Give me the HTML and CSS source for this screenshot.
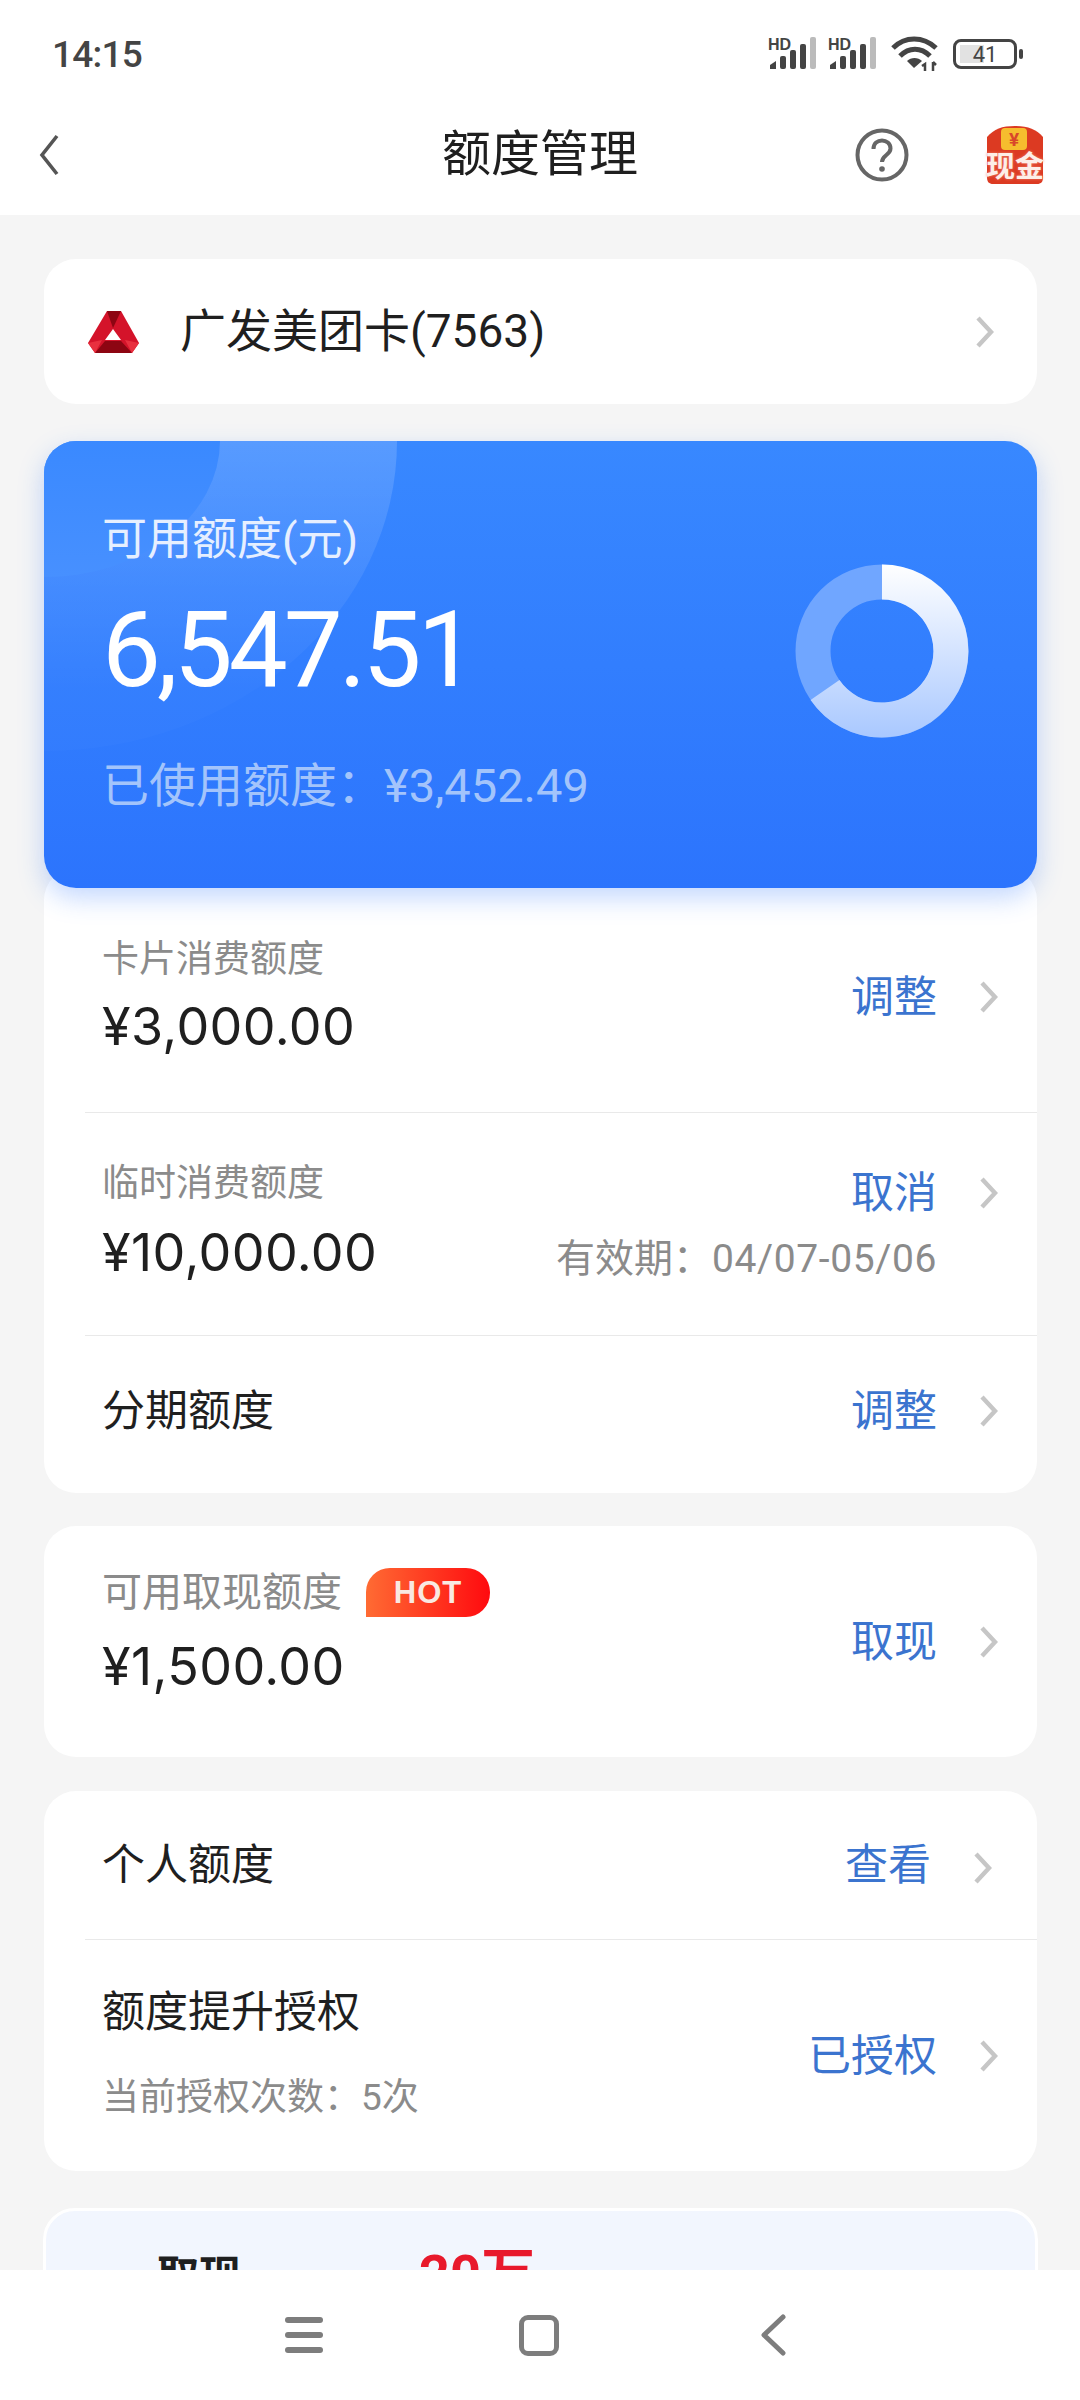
FILE: index.html
```html
<!DOCTYPE html>
<html lang="zh-CN">
<head>
    <meta charset="UTF-8">
    <meta name="viewport" content="width=device-width, initial-scale=1.0">
    <title>额度管理</title>
    <link rel="stylesheet" href="styles.css">
</head>
<body>
    <div class="screen">
        <div class="status-bar">
            <span class="clock">14:15</span>
            <div class="status-icons">
                <svg class="signal" width="50" height="34" viewBox="0 0 50 34">
                    <text x="0" y="13" class="hd">HD</text>
                    <path d="M2 32 V28 L8 24 V32 Z" fill="#444"/>
                    <rect x="12" y="19" width="6" height="13" rx="2" fill="#444"/>
                    <rect x="22" y="13" width="6" height="19" rx="2" fill="#444"/>
                    <rect x="32" y="7" width="6" height="25" rx="2" fill="#444"/>
                    <rect x="42" y="0" width="6" height="32" rx="2" fill="#bbb"/>
                </svg>
                <svg class="signal" width="50" height="34" viewBox="0 0 50 34">
                    <text x="0" y="13" class="hd">HD</text>
                    <path d="M2 32 V28 L8 24 V32 Z" fill="#444"/>
                    <rect x="12" y="19" width="6" height="13" rx="2" fill="#444"/>
                    <rect x="22" y="13" width="6" height="19" rx="2" fill="#444"/>
                    <rect x="32" y="7" width="6" height="25" rx="2" fill="#444"/>
                    <rect x="42" y="0" width="6" height="32" rx="2" fill="#bbb"/>
                </svg>
                <svg class="wifi" width="48" height="36" viewBox="0 0 48 36">
                    <path d="M2 12 C14 0 32 0 45 12" fill="none" stroke="#444" stroke-width="5"/>
                    <path d="M9 20 C18 11 30 11 39 20" fill="none" stroke="#444" stroke-width="5"/>
                    <path d="M16 25 C20 21 27 21 31 25 L23 32 Z" fill="#444"/>
                    <path d="M34 35 V28 L31 30 M42 26 V35 M42 26 L45 29" fill="none" stroke="#444" stroke-width="2.5"/>
                </svg>
                <div class="battery">
                    <div class="battery-fill"></div>
                    <span class="battery-num">41</span>
                </div>
                <div class="battery-nub"></div>
            </div>
        </div>

        <header class="top-bar">
            <svg class="back" width="20" height="44" viewBox="0 0 20 44">
                <path d="M18 3 L3 22 L18 41" fill="none" stroke="#555" stroke-width="3.6"/>
            </svg>
            <h1 class="page-title">额度管理</h1>
            <svg class="help" width="54" height="54" viewBox="0 0 54 54">
                <circle cx="27" cy="27" r="24.5" fill="none" stroke="#666" stroke-width="4"/>
                <path d="M18.5 21 C18.5 9.5 35.5 10 35.5 20.5 C35.5 27 27 27 27 34" fill="none" stroke="#666" stroke-width="4"/>
                <circle cx="27" cy="41" r="2.8" fill="#666"/>
            </svg>
            <div class="cash-icon">
                <svg width="58" height="60" viewBox="0 0 58 60">
                    <path d="M1 12 C8 4 16 1 29 1 C42 1 50 4 57 12 V52 C57 57 55 59 51 59 H7 C3 59 1 57 1 52 Z" fill="#dc3a22"/>
                    <rect x="15" y="3" width="26" height="22" rx="4" fill="#f6bd2e"/>
                    <text x="28" y="21" class="cash-yen">¥</text>
                </svg>
                <span class="cash-text">现金</span>
            </div>
        </header>

        <main class="content">
            <section class="card card-bank">
                <svg class="bank-logo" width="51" height="42" viewBox="0 0 51 42">
                    <path d="M19 0 H33 L51 32 L44 42 H7 L0 32 Z M25 18 L17 29 H33 Z" fill="#d4132a" fill-rule="evenodd"/>
                    <path d="M19 0 H33 L25 17 Z" fill="#8d0512"/>
                    <path d="M17 30 H33 L44 42 H7 Z" fill="#8d0512"/>
                    <path d="M0 32 L14 29 L7 42 Z" fill="#e8303f"/>
                    <path d="M37 29 L51 32 L44 42 Z" fill="#e8303f"/>
                </svg>
                <span class="bank-name">广发美团卡(7563)</span>
                <svg class="chevron chevron-bank" width="20" height="34" viewBox="0 0 20 34"><path d="M3 3 L16 17 L3 31" fill="none" stroke="#c6c6c6" stroke-width="4.4"/></svg>
            </section>

            <section class="card-blue">
                <div class="arc arc-big"></div>
                <div class="arc arc-small"></div>
                <div class="blue-text">
                    <div class="blue-label">可用额度(元)</div>
                    <div class="blue-amount">6,547.51</div>
                    <div class="blue-used">已使用额度：¥3,452.49</div>
                </div>
                <svg class="donut" width="174" height="174" viewBox="0 0 174 174">
                    <defs>
                        <linearGradient id="donutFill" gradientUnits="userSpaceOnUse" x1="0" y1="0" x2="0" y2="174">
                            <stop offset="0" stop-color="#ffffff"/>
                            <stop offset="1" stop-color="#a9c8ff"/>
                        </linearGradient>
                    </defs>
                    <circle cx="87" cy="87" r="69" fill="none" stroke="#70a6ff" stroke-width="35"/>
                    <path d="M87 18 A69 69 0 1 1 30 126" fill="none" stroke="url(#donutFill)" stroke-width="35"/>
                </svg>
            </section>

            <section class="card card-limits">
                <div class="row row-first">
                    <div class="row-main">
                        <div class="label">卡片消费额度</div>
                        <div class="amount">¥3,000.00</div>
                    </div>
                    <div class="row-side">
                        <div class="action-line">
                            <span class="action">调整</span>
                            <svg class="chevron" width="20" height="34" viewBox="0 0 20 34"><path d="M3 3 L16 17 L3 31" fill="none" stroke="#c6c6c6" stroke-width="4.4"/></svg>
                        </div>
                    </div>
                </div>
                <div class="row row-temp">
                    <div class="row-main">
                        <div class="label">临时消费额度</div>
                        <div class="amount">¥10,000.00</div>
                    </div>
                    <div class="row-side">
                        <div class="action-line">
                            <span class="action">取消</span>
                            <svg class="chevron" width="20" height="34" viewBox="0 0 20 34"><path d="M3 3 L16 17 L3 31" fill="none" stroke="#c6c6c6" stroke-width="4.4"/></svg>
                        </div>
                        <div class="valid">有效期：<span class="valid-date">04/07-05/06</span></div>
                    </div>
                </div>
                <div class="row row-plain">
                    <div class="row-main">
                        <div class="row-title">分期额度</div>
                    </div>
                    <div class="row-side">
                        <div class="action-line">
                            <span class="action">调整</span>
                            <svg class="chevron" width="20" height="34" viewBox="0 0 20 34"><path d="M3 3 L16 17 L3 31" fill="none" stroke="#c6c6c6" stroke-width="4.4"/></svg>
                        </div>
                    </div>
                </div>
            </section>

            <section class="card card-cash">
                <div class="row row-cash">
                    <div class="row-main">
                        <div class="label label-hot">可用取现额度<span class="hot">HOT</span></div>
                        <div class="amount">¥1,500.00</div>
                    </div>
                    <div class="row-side">
                        <div class="action-line">
                            <span class="action">取现</span>
                            <svg class="chevron" width="20" height="34" viewBox="0 0 20 34"><path d="M3 3 L16 17 L3 31" fill="none" stroke="#c6c6c6" stroke-width="4.4"/></svg>
                        </div>
                    </div>
                </div>
            </section>

            <section class="card card-personal">
                <div class="row row-person">
                    <div class="row-main">
                        <div class="row-title">个人额度</div>
                    </div>
                    <div class="row-side">
                        <div class="action-line action-line-wide">
                            <span class="action">查看</span>
                            <svg class="chevron chevron-low" width="20" height="34" viewBox="0 0 20 34"><path d="M3 3 L16 17 L3 31" fill="none" stroke="#c6c6c6" stroke-width="4.4"/></svg>
                        </div>
                    </div>
                </div>
                <div class="row row-auth">
                    <div class="row-main">
                        <div class="row-title">额度提升授权</div>
                        <div class="auth-count">当前授权次数：5次</div>
                    </div>
                    <div class="row-side">
                        <div class="action-line">
                            <span class="action">已授权</span>
                            <svg class="chevron" width="20" height="34" viewBox="0 0 20 34"><path d="M3 3 L16 17 L3 31" fill="none" stroke="#c6c6c6" stroke-width="4.4"/></svg>
                        </div>
                    </div>
                </div>
            </section>

            <section class="card-promo">
                <span class="promo-title">取现</span>
                <span class="promo-value">20万</span>
            </section>
        </main>

        <nav class="nav-bar">
            <div class="nav-menu">
                <span></span><span></span><span></span>
            </div>
            <div class="nav-home"></div>
            <svg class="nav-back" width="26" height="42" viewBox="0 0 26 42">
                <path d="M23 3 L4 21 L23 39" fill="none" stroke="#7d7d7d" stroke-width="5" stroke-linecap="round" stroke-linejoin="round"/>
            </svg>
        </nav>
    </div>
</body>
</html>
```

FILE: styles.css
```css
* {
    box-sizing: border-box;
}
html, body {
    margin: 0;
    padding: 0;
}
body {
    font-family: Roboto, "Noto Sans CJK SC", sans-serif;
    color: #1f1f1f;
    background: #f5f5f5;
}
.screen {
    width: 1080px;
    height: 2400px;
    display: flex;
    flex-direction: column;
    overflow: hidden;
}

/* status bar */
.status-bar {
    height: 100px;
    padding: 8px 57px 0 52px;
    background: #fff;
    display: flex;
    align-items: center;
    justify-content: space-between;
    flex-shrink: 0;
}
.clock {
    font-size: 37px;
    font-weight: 500;
    color: #444;
    letter-spacing: -0.8px;
}
.status-icons {
    display: flex;
    align-items: center;
}
.signal {
    margin-right: 10px;
}
.hd {
    font-family: "Liberation Sans", sans-serif;
    font-size: 16px;
    font-weight: 700;
    fill: #444;
}
.wifi {
    margin: 0 14px 0 3px;
}
.battery {
    width: 64px;
    height: 30px;
    border: 3px solid #444;
    border-radius: 8px;
    display: flex;
    align-items: center;
    justify-content: center;
    position: relative;
}
.battery-fill {
    position: absolute;
    left: 4px;
    top: 3px;
    bottom: 3px;
    width: 24px;
    background: #e2e2e2;
}
.battery-num {
    position: relative;
    font-size: 22px;
    color: #444;
}
.battery-nub {
    width: 4px;
    height: 10px;
    margin-left: 2px;
    background: #444;
    border-radius: 2px;
}

/* header */
.top-bar {
    height: 115px;
    background: #fff;
    display: flex;
    align-items: center;
    position: relative;
    padding: 0 36px 6px 39px;
    flex-shrink: 0;
}
.back {
    flex-shrink: 0;
}
.page-title {
    margin: 0;
    position: absolute;
    left: 0;
    right: 0;
    top: 20px;
    text-align: center;
    font-size: 49px;
    line-height: 70px;
    font-weight: 400;
    pointer-events: none;
}
.help {
    margin-left: auto;
}
.cash-icon {
    width: 58px;
    height: 60px;
    margin-left: 77px;
    position: relative;
}
.cash-text {
    position: absolute;
    left: -1px;
    top: 25px;
    width: 60px;
    text-align: center;
    font-size: 29px;
    line-height: 34px;
    font-weight: 700;
    color: #fdeee8;
    white-space: nowrap;
    text-shadow: 0 0 3px #f0806c;
}
.cash-yen {
    font-size: 19px;
    font-weight: 700;
    fill: #d9472a;
    text-anchor: middle;
}

/* content */
.content {
    flex: 1;
    min-height: 0;
    overflow: hidden;
    padding: 44px 43px 0 44px;
}
.card {
    background: #fff;
    border-radius: 32px;
}
.card-bank {
    height: 145px;
    display: flex;
    align-items: center;
    padding: 0 42px 0 44px;
}
.bank-logo {
    flex-shrink: 0;
}
.bank-name {
    margin: -9px 0 0 41px;
    font-size: 46px;
}
.chevron {
    flex-shrink: 0;
    display: block;
}
.chevron-bank {
    margin-left: auto;
}
.chevron-low {
    margin-top: 6px;
}

/* blue card */
.card-blue {
    margin-top: 37px;
    height: 447px;
    position: relative;
    z-index: 1;
    overflow: hidden;
    border-radius: 32px;
    background: linear-gradient(180deg, #3888ff 0%, #2c74fd 100%);
    box-shadow: 0 10px 26px rgba(44, 116, 253, 0.28);
    padding: 69px 68px 0 58px;
    display: flex;
    align-items: flex-start;
    justify-content: space-between;
}
.arc {
    position: absolute;
    border-radius: 50%;
}
.arc-big {
    left: -353px;
    top: -310px;
    width: 706px;
    height: 620px;
    background: linear-gradient(180deg, rgba(255, 255, 255, 0.16) 50%, rgba(255, 255, 255, 0.015) 90%);
}
.arc-small {
    left: -176px;
    top: -136px;
    width: 352px;
    height: 272px;
    background: linear-gradient(180deg, #3a89ff 50%, #4790ff 100%);
}
.blue-text {
    position: relative;
    color: #fff;
}
.blue-label {
    font-size: 45px;
    line-height: 60px;
    color: #e6efff;
}
.blue-amount {
    font-size: 105px;
    line-height: 120px;
    margin-top: 21px;
    letter-spacing: -4px;
}
.blue-used {
    font-size: 47px;
    line-height: 60px;
    margin-top: 45px;
    color: #a3c4fb;
}
.donut {
    position: relative;
    flex-shrink: 0;
    margin-top: 54px;
}

/* rows */
.card-limits {
    margin-top: -20px;
    padding-top: 20px;
    height: 625px;
}
.row {
    margin-left: 41px;
    padding: 0 38px 0 17px;
    display: flex;
    justify-content: space-between;
    align-items: center;
}
.row + .row {
    border-top: 1px solid #e9e9e9;
}
.row-first {
    height: 224px;
    padding-bottom: 6px;
}
.row-temp {
    height: 223px;
}
.row-plain {
    height: 158px;
    padding-bottom: 8px;
}
.row-main {
    display: flex;
    flex-direction: column;
}
.row-side {
    display: flex;
    flex-direction: column;
    align-items: flex-end;
}
.label {
    font-size: 37px;
    line-height: 50px;
    color: #8b8b8b;
}
.row-first .label {
    margin-top: -3px;
}
.row-temp .label {
    margin-top: -6px;
}
.amount {
    font-family: Inter, "Noto Sans CJK SC", sans-serif;
    font-size: 52px;
    line-height: 60px;
    letter-spacing: 0.4px;
    margin-top: 12px;
    color: #1f1f1f;
}
.row-temp .amount {
    margin-top: 14px;
}
.row-title {
    font-size: 43px;
    line-height: 58px;
}
.action-line {
    display: flex;
    align-items: center;
    gap: 42px;
}
.action {
    font-size: 43px;
    line-height: 58px;
    color: #3b74cf;
}
.valid {
    margin: 12px 62px 0 0;
    font-size: 39px;
    line-height: 50px;
    color: #8b8b8b;
}
.valid-date {
    letter-spacing: 0.6px;
}
.label-hot {
    display: flex;
    align-items: center;
    font-size: 40px;
    margin-top: -18px;
}
.hot {
    margin: -2px 0 0 24px;
    width: 124px;
    height: 49px;
    border-radius: 24px 24px 24px 0;
    background: linear-gradient(90deg, #ff6b33, #ff0a0f);
    color: #f9e9e2;
    font-size: 31px;
    line-height: 49px;
    font-weight: 700;
    letter-spacing: 1px;
    text-align: center;
    font-family: "Liberation Sans", sans-serif;
}
.card-cash {
    margin-top: 33px;
    height: 231px;
}
.row-cash {
    height: 231px;
}
.row-cash .amount {
    margin-top: 19px;
}
.card-personal {
    margin-top: 34px;
    height: 380px;
}
.row-person {
    height: 148px;
    padding-right: 44px;
}
.row-auth {
    height: 232px;
}
.row-auth .row-main {
    margin-top: -6px;
}
.auth-count {
    margin-top: 32px;
    font-size: 37px;
    line-height: 50px;
    color: #8b8b8b;
}
.card-promo {
    margin-top: 37px;
    height: 200px;
    margin-left: -1px;
    margin-right: -1px;
    border: 3px solid #fff;
    border-radius: 32px;
    background: #f2f6fe;
    display: flex;
    align-items: flex-start;
    padding: 36px 0 0 111px;
}
.promo-title {
    font-size: 42px;
    line-height: 60px;
    font-weight: 700;
}
.promo-value {
    margin: -2px 0 0 178px;
    font-size: 54px;
    line-height: 60px;
    font-weight: 700;
    color: #e8192c;
}

/* navigation bar */
.nav-bar {
    height: 130px;
    flex-shrink: 0;
    background: #fff;
    position: relative;
    z-index: 2;
    display: flex;
    align-items: center;
    padding: 0 0 0 285px;
}
.nav-menu {
    width: 38px;
    display: flex;
    flex-direction: column;
    gap: 9px;
}
.nav-menu span {
    height: 6px;
    border-radius: 3px;
    background: #7d7d7d;
}
.nav-home {
    width: 40px;
    height: 41px;
    margin-left: 196px;
    border: 5px solid #7d7d7d;
    border-radius: 9px;
}
.nav-back {
    margin-left: 201px;
}
```
